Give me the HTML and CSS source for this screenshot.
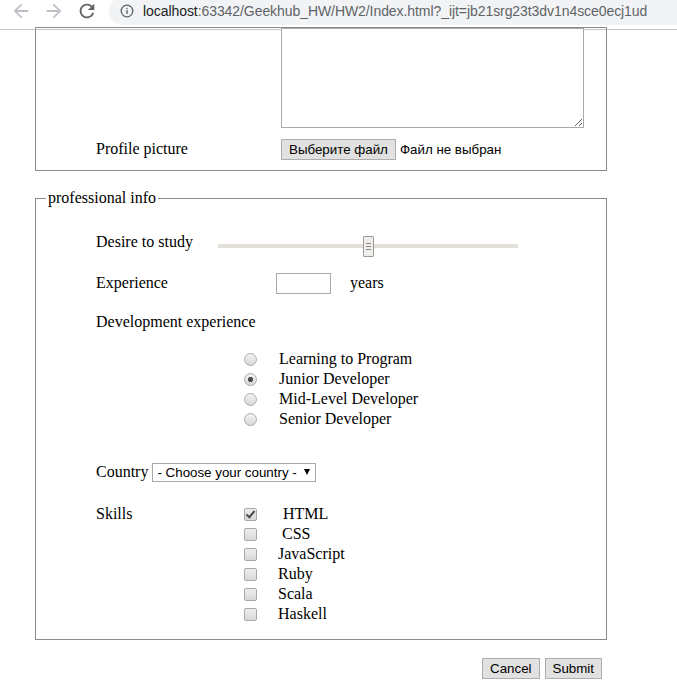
FILE: index.html
```html
<!DOCTYPE html>
<html lang="en">
<head>
<meta charset="utf-8">
<title>Index</title>
<link rel="stylesheet" href="styles.css">
</head>
<body>
<header class="chrome">
  <nav class="nav">
    <svg class="nav-icon nav-back" viewBox="0 0 24 24" width="22" height="22"><path d="M20 11H7.83l5.59-5.59L12 4l-8 8 8 8 1.41-1.41L7.83 13H20v-2z" fill="#bdc1c6"/></svg>
    <svg class="nav-icon nav-fwd" viewBox="0 0 24 24" width="22" height="22"><path d="M12 4l-1.41 1.41L16.17 11H4v2h12.17l-5.58 5.59L12 20l8-8z" fill="#bdc1c6"/></svg>
    <svg class="nav-icon nav-reload" viewBox="0 0 24 24" width="22" height="22"><path d="M17.65 6.35C16.2 4.9 14.21 4 12 4c-4.42 0-7.99 3.58-7.99 8s3.57 8 7.99 8c3.73 0 6.84-2.55 7.73-6h-2.08c-.82 2.33-3.04 4-5.65 4-3.31 0-6-2.69-6-6s2.69-6 6-6c1.66 0 3.14.69 4.22 1.78L13 11h7V4l-2.35 2.35z" fill="#5f6368"/></svg>
  </nav>
  <div class="omnibox">
    <svg class="info" viewBox="0 0 14 14" width="14" height="14"><circle cx="7" cy="7" r="5.8" fill="none" stroke="#5f6368" stroke-width="1.3"/><rect x="6.35" y="6" width="1.3" height="4" fill="#5f6368"/><rect x="6.35" y="3.8" width="1.3" height="1.3" fill="#5f6368"/></svg>
    <span class="url"><span class="host">localhost</span>:63342/Geekhub_HW/HW2/Index.html?_ijt=jb21srg23t3dv1n4sce0ecj1ud</span>
  </div>
</header>

<main class="page">
  <form class="form">
    <fieldset class="fs fs-top">
      <div class="row row-textarea">
        <textarea class="about"></textarea>
      </div>
      <div class="row row-file">
        <label class="lbl lbl-wide">Profile picture</label>
        <button type="button" class="btn">Выберите файл</button>
        <span class="file-none">Файл не выбран</span>
      </div>
    </fieldset>

    <fieldset class="fs fs-pro">
      <legend class="legend">professional info</legend>

      <div class="row row-desire">
        <label class="lbl lbl-desire">Desire to study</label>
        <input class="slider" type="range" min="0" max="100" value="50">
      </div>

      <div class="row row-exp">
        <label class="lbl lbl-exp">Experience</label>
        <input class="years-input" type="text">
        <span class="years">years</span>
      </div>

      <div class="row row-dev">
        <span class="lbl">Development experience</span>
      </div>

      <div class="radios">
        <label class="opt"><input class="radio" type="radio" name="lvl"><span class="opt-text">Learning to Program</span></label>
        <label class="opt"><input class="radio" type="radio" name="lvl" checked><span class="opt-text">Junior Developer</span></label>
        <label class="opt"><input class="radio" type="radio" name="lvl"><span class="opt-text">Mid-Level Developer</span></label>
        <label class="opt"><input class="radio" type="radio" name="lvl"><span class="opt-text">Senior Developer</span></label>
      </div>

      <div class="row row-country">
        <label class="lbl">Country</label>
        <span class="select"><select class="country"><option>- Choose your country -</option></select></span>
      </div>

      <div class="skills">
        <span class="lbl lbl-skills">Skills</span>
        <div class="checks">
          <label class="opt"><input class="check" type="checkbox" checked><span class="opt-text pad5">HTML</span></label>
          <label class="opt"><input class="check" type="checkbox"><span class="opt-text pad4">CSS</span></label>
          <label class="opt"><input class="check" type="checkbox"><span class="opt-text">JavaScript</span></label>
          <label class="opt"><input class="check" type="checkbox"><span class="opt-text">Ruby</span></label>
          <label class="opt"><input class="check" type="checkbox"><span class="opt-text">Scala</span></label>
          <label class="opt"><input class="check" type="checkbox"><span class="opt-text">Haskell</span></label>
        </div>
      </div>
    </fieldset>

    <div class="actions">
      <button type="reset" class="btn">Cancel</button>
      <button type="button" class="btn">Submit</button>
    </div>
  </form>
</main>
</body>
</html>
```

FILE: styles.css
```css
html, body {
  margin: 0;
  padding: 0;
  overflow: hidden;
  background: #fff;
}

body {
  font-family: "Liberation Serif", "Times New Roman", serif;
  font-size: 16px;
  line-height: 18px;
  color: #000;
}

/* ---------- browser toolbar ---------- */
.chrome {
  display: flex;
  align-items: flex-start;
  height: 29px;
  border-bottom: 1px solid #c6c6c6;
  overflow: hidden;
  background: #fff;
}

.nav {
  display: flex;
  padding: 0 0 0 10px;
  gap: 11px;
}

.nav-icon {
  display: block;
}

.omnibox {
  flex: 1;
  display: flex;
  align-items: center;
  height: 28px;
  margin: -3px 0 0 11px;
  padding-left: 11px;
  border-radius: 14px 0 0 14px;
  background: #f1f3f4;
}

.info {
  display: block;
  flex: none;
}

.url {
  margin-left: 9px;
  font-family: "Liberation Sans", Arial, sans-serif;
  font-size: 14px;
  line-height: 16px;
  letter-spacing: -0.07px;
  color: #5f6368;
  white-space: nowrap;
}

.host {
  color: #202124;
}

/* ---------- page ---------- */
.page {
  padding-left: 35px;
}

.form {
  width: 572px;
}

.fs {
  margin: 0;
  border: 1px solid #8c8c8c;
  min-width: 0;
}

.fs-top {
  margin-top: -3px;
  padding: 0 0 10px 0;
}

.row {
  display: flex;
  align-items: baseline;
}

.row-textarea {
  padding-left: 245px;
}

.about {
  display: block;
  box-sizing: border-box;
  width: 303px;
  height: 100px;
  margin: 0;
  border: 1px solid #a9a9a9;
  font-family: "Liberation Mono", monospace;
  font-size: 13px;
}

.row-file {
  margin-top: 11px;
  padding-left: 60px;
}

.lbl {
  flex: none;
}

.lbl-wide {
  width: 185px;
}

.btn {
  font-family: "Liberation Sans", Arial, sans-serif;
  font-size: 13.33px;
  line-height: 15px;
  color: #000;
  padding: 2px 7px 2px;
  margin: 0;
  border: 1px solid #adadad;
  border-radius: 0;
  background: #e1e1e1;
}

.file-none {
  margin-left: 4px;
  font-family: "Liberation Sans", Arial, sans-serif;
  font-size: 13.33px;
}

/* ---------- professional info ---------- */
.fs-pro {
  margin-top: 18px;
  padding: 0 0 15px 10px;
}

.legend {
  padding: 0 2px;
  line-height: 18px;
}

.fs-pro > .row,
.fs-pro > .radios,
.fs-pro > .skills {
  margin-left: 50px;
}

.row-desire {
  align-items: flex-start;
  margin-top: 26px;
  height: 24px;
}

.lbl-desire {
  width: 122px;
}

.slider {
  -webkit-appearance: none;
  appearance: none;
  display: block;
  width: 300px;
  height: 21px;
  margin: 2px 0 0;
  padding: 0;
  background: transparent;
}

.slider::-webkit-slider-runnable-track {
  height: 4px;
  background: #e3dfdb;
  border: none;
}

.slider::-webkit-slider-thumb {
  -webkit-appearance: none;
  appearance: none;
  box-sizing: border-box;
  width: 11px;
  height: 21px;
  margin-top: -8px;
  border: 1px solid #9e9a96;
  border-radius: 1px;
  background:
    linear-gradient(#8c8a87, #8c8a87) 50% 6px / 5px 1px no-repeat,
    linear-gradient(#8c8a87, #8c8a87) 50% 9px / 5px 1px no-repeat,
    linear-gradient(#8c8a87, #8c8a87) 50% 12px / 5px 1px no-repeat,
    #f0eeec;
}

.row-exp {
  margin-top: 16px;
}

.lbl-exp {
  width: 180px;
}

.years-input {
  box-sizing: border-box;
  width: 55px;
  height: 21px;
  margin: 0;
  padding: 1px 2px;
  border: 1px solid #a9a9a9;
  font-family: "Liberation Sans", Arial, sans-serif;
  font-size: 13.33px;
}

.years {
  margin-left: 19px;
}

.row-dev {
  margin-top: 19px;
}

.radios {
  margin-top: 18px;
  padding-left: 148px;
}

.opt {
  display: flex;
  align-items: center;
  height: 20px;
}

.radio {
  -webkit-appearance: none;
  appearance: none;
  box-sizing: border-box;
  width: 13px;
  height: 13px;
  margin: 0;
  flex: none;
  border: 1px solid #acacac;
  border-radius: 50%;
  background: linear-gradient(#f4f4f4, #d6d6d6);
}

.radio:checked {
  background:
    radial-gradient(circle, #4d4d4d 0 2.2px, rgba(77,77,77,0) 3px),
    linear-gradient(#f4f4f4, #d6d6d6);
}

.opt-text {
  margin-left: 22px;
}

.pad5 {
  padding-left: 5px;
}

.pad4 {
  padding-left: 4px;
}

.row-country {
  margin-top: 34px;
}

.select {
  position: relative;
  display: inline-block;
  margin-left: 4px;
}

.country {
  -webkit-appearance: none;
  appearance: none;
  box-sizing: border-box;
  width: 164px;
  height: 19px;
  margin: 0;
  padding: 0 0 0 4px;
  border: 1px solid #a9a9a9;
  border-radius: 0;
  background: #fff;
  color: #000;
  font-family: "Liberation Sans", Arial, sans-serif;
  font-size: 13.33px;
}

.select::after {
  content: "";
  position: absolute;
  right: 6px;
  top: 6px;
  border-left: 3.5px solid transparent;
  border-right: 3.5px solid transparent;
  border-top: 6px solid #000;
  pointer-events: none;
}

.skills {
  display: flex;
  margin-top: 22px;
}

.lbl-skills {
  width: 148px;
  padding-top: 1px;
}

.check {
  -webkit-appearance: none;
  appearance: none;
  position: relative;
  box-sizing: border-box;
  width: 13px;
  height: 13px;
  margin: 0;
  flex: none;
  border: 1px solid #a8a8a8;
  border-radius: 2px;
  background: linear-gradient(#eeeeee, #d8d8d8);
}

.check:checked::after {
  content: "";
  position: absolute;
  left: 3px;
  top: 0;
  width: 3px;
  height: 7px;
  border: solid #4a4a4a;
  border-width: 0 2px 2px 0;
  transform: rotate(40deg);
}

.checks .opt-text {
  margin-left: 21px;
}

/* ---------- actions ---------- */
.actions {
  display: flex;
  justify-content: flex-end;
  gap: 5px;
  margin-top: 18px;
  padding-right: 5px;
}
```
